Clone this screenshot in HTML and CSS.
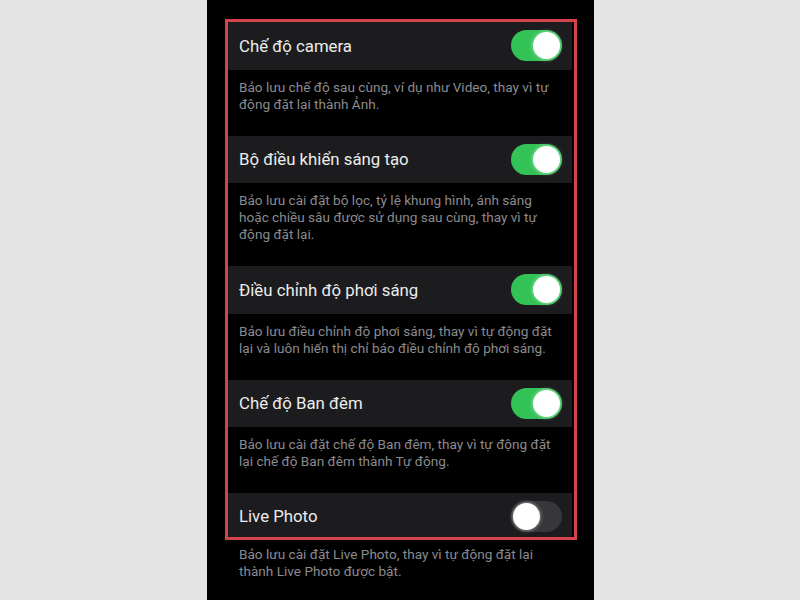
FILE: index.html
```html
<!DOCTYPE html>
<html lang="vi">
<head>
<meta charset="utf-8">
<link rel="stylesheet" href="styles.css">
</head>
<body>
<div class="phone">
  <div class="frame">
    <div class="row">
      <span class="title">Chế độ camera</span>
      <span class="toggle on"><span class="knob"></span></span>
    </div>
    <div class="desc">Bảo lưu chế độ sau cùng, ví dụ như Video, thay vì tự<br>động đặt lại thành Ảnh.</div>

    <div class="row">
      <span class="title">Bộ điều khiển sáng tạo</span>
      <span class="toggle on"><span class="knob"></span></span>
    </div>
    <div class="desc">Bảo lưu cài đặt bộ lọc, tỷ lệ khung hình, ánh sáng<br>hoặc chiều sâu được sử dụng sau cùng, thay vì tự<br>động đặt lại.</div>

    <div class="row">
      <span class="title">Điều chỉnh độ phơi sáng</span>
      <span class="toggle on"><span class="knob"></span></span>
    </div>
    <div class="desc">Bảo lưu điều chỉnh độ phơi sáng, thay vì tự động đặt<br>lại và luôn hiển thị chỉ báo điều chỉnh độ phơi sáng.</div>

    <div class="row">
      <span class="title">Chế độ Ban đêm</span>
      <span class="toggle on"><span class="knob"></span></span>
    </div>
    <div class="desc">Bảo lưu cài đặt chế độ Ban đêm, thay vì tự động đặt<br>lại chế độ Ban đêm thành Tự động.</div>

    <div class="row last">
      <span class="title">Live Photo</span>
      <span class="toggle off"><span class="knob"></span></span>
    </div>
  </div>
  <div class="desc outside">Bảo lưu cài đặt Live Photo, thay vì tự động đặt lại<br>thành Live Photo được bật.</div>
</div>
</body>
</html>
```
FILE: styles.css
```css
html, body {
  margin: 0;
  padding: 0;
}
body {
  background: #e4e4e4;
  font-family: "Roboto", "Liberation Sans", sans-serif;
  width: 800px;
  height: 600px;
  overflow: hidden;
}
.phone {
  margin-left: 207px;
  width: 387px;
  height: 600px;
  background: #000;
  padding-top: 19px;
  box-sizing: border-box;
}
.frame {
  margin-left: 18px;
  width: 352px;
  border: 3px solid #d4434c;
  box-sizing: border-box;
  padding-right: 2px;
}
.row {
  height: 47.5px;
  background: #1c1c1e;
  display: flex;
  align-items: center;
  justify-content: space-between;
  padding: 0 10px 0 11px;
  box-sizing: border-box;
}
.row.last {
  height: 43.5px;
  padding-top: 3px;
}
.title {
  color: #ececec;
  font-size: 16.8px;
  letter-spacing: 0;
}
.toggle {
  width: 51px;
  height: 31px;
  border-radius: 16px;
  display: flex;
  align-items: center;
  padding: 2px;
  box-sizing: border-box;
}
.toggle.on {
  background: #33c256;
  justify-content: flex-end;
}
.toggle.off {
  background: #37373b;
  justify-content: flex-start;
}
.knob {
  width: 27px;
  height: 27px;
  border-radius: 50%;
  background: #ffffff;
  box-shadow: 0 0 4px rgba(255, 255, 255, 0.6);
}
.desc {
  color: #8b8b8f;
  font-size: 13.6px;
  line-height: 17px;
  padding: 9px 11px 23px 11px;
  white-space: nowrap;
}
.desc.outside {
  margin-left: 21px;
  padding-top: 6px;
  line-height: 17.5px;
}
```
